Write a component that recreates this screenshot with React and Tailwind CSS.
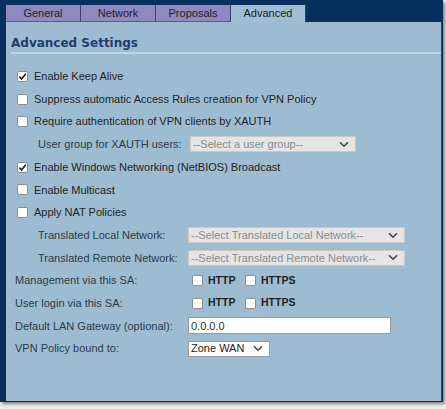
import React from 'react';

const Check = ({ checked }) => (
  <span className="w-[11px] h-[11px] bg-white border border-[#8f8f8f] rounded-[2px] flex items-center justify-center shrink-0">
    {checked && (
      <svg width="9" height="9" viewBox="0 0 10 10">
        <path d="M1.5 5.2 L4 7.8 L8.6 1.8" fill="none" stroke="#1a1a1a" strokeWidth="1.8" />
      </svg>
    )}
  </span>
);

const Chevron = () => (
  <svg width="10" height="7" viewBox="0 0 10 7" className="shrink-0">
    <path d="M1 1.2 L5 5.2 L9 1.2" fill="none" stroke="#444" strokeWidth="1.6" />
  </svg>
);

const Select = ({ text, width, disabled = true }) => (
  <div
    className={`h-[16px] flex items-center justify-between pl-[2px] pr-[6px] border ${
      disabled ? 'bg-[#e5e5e5] border-[#c9c9c9] text-[#8b8b8b]' : 'bg-white border-[#9a9a9a] text-[#222]'
    }`}
    style={{ width }}
  >
    <span className="truncate">{text}</span>
    <Chevron />
  </div>
);

const CheckRow = ({ checked, label }) => (
  <div className="h-[22.7px] flex items-center pl-[11px] gap-[6px] text-[#1e1e1e]">
    <Check checked={checked} />
    <span>{label}</span>
  </div>
);

const SubRow = ({ label, children }) => (
  <div className="h-[22.7px] flex items-center">
    <span className="w-[182px] pl-[32px] text-[#2c3a48] shrink-0">{label}</span>
    {children}
  </div>
);

const FieldRow = ({ label, children }) => (
  <div className="h-[22.7px] flex items-center">
    <span className="w-[182px] pl-[9px] text-[#2c3a48] shrink-0">{label}</span>
    {children}
  </div>
);

const Proto = () => (
  <div className="flex items-center ml-[4px] gap-[5px] text-[#1e1e1e] font-bold text-[10.5px]">
    <Check />
    <span className="w-[32px]">HTTP</span>
    <Check />
    <span>HTTPS</span>
  </div>
);

const tabs = ['General', 'Network', 'Proposals', 'Advanced'];

export default function App() {
  return (
    <div
      className="w-[446px] h-[409px] bg-[#eeeeee] overflow-hidden text-[11px]"
      style={{ fontFamily: '"Liberation Sans", Arial, sans-serif' }}
    >
      <div className="w-[443px] h-[402px] bg-[#08305f] pl-[6px] pr-[1px] pb-[1px] flex flex-col shadow-[2px_2px_3px_rgba(0,0,0,0.45)]">
        {/* Tabs */}
        <div className="h-[22px] flex items-end shrink-0">
          {tabs.map((t) => (
            <div
              key={t}
              className={`w-[75px] h-[17px] flex items-center justify-center border-r border-[#3c3f66] text-[#222] ${
                t === 'Advanced' ? 'bg-[#a0bed3]' : 'bg-[#8f89c0] border-b border-b-[#5b5c85]'
              }`}
            >
              {t}
            </div>
          ))}
        </div>

        {/* Panel */}
        <div className="flex-1 bg-[#9ebcd1] border-r border-[#2f3b48]">
          <div className="mt-[14px] ml-[5px] pb-[2px] border-b-2 border-[#c3d6e4]">
            <h1
              className="text-[12px] font-bold text-[#1d3d70] leading-[14px]"
              style={{ fontFamily: '"DejaVu Sans", Verdana, sans-serif' }}
            >
              Advanced Settings
            </h1>
          </div>

          <div className="mt-[11px]">
            <CheckRow checked label="Enable Keep Alive" />
            <CheckRow label="Suppress automatic Access Rules creation for VPN Policy" />
            <CheckRow label="Require authentication of VPN clients by XAUTH" />
            <SubRow label="User group for XAUTH users:">
              <div className="ml-[2px]">
                <Select text="--Select a user group--" width={166} />
              </div>
            </SubRow>
            <CheckRow checked label="Enable Windows Networking (NetBIOS) Broadcast" />
            <CheckRow label="Enable Multicast" />
            <CheckRow label="Apply NAT Policies" />
            <SubRow label="Translated Local Network:">
              <Select text="--Select Translated Local Network--" width={217} />
            </SubRow>
            <SubRow label="Translated Remote Network:">
              <Select text="--Select Translated Remote Network--" width={217} />
            </SubRow>
            <FieldRow label="Management via this SA:">
              <Proto />
            </FieldRow>
            <FieldRow label="User login via this SA:">
              <Proto />
            </FieldRow>
            <FieldRow label="Default LAN Gateway (optional):">
              <div className="w-[203px] h-[17px] bg-white border border-[#9a9a9a] flex items-center pl-[2px] text-[#333]">
                0.0.0.0
              </div>
            </FieldRow>
            <FieldRow label="VPN Policy bound to:">
              <Select text="Zone WAN" width={82} disabled={false} />
            </FieldRow>
          </div>
        </div>
      </div>
    </div>
  );
}
